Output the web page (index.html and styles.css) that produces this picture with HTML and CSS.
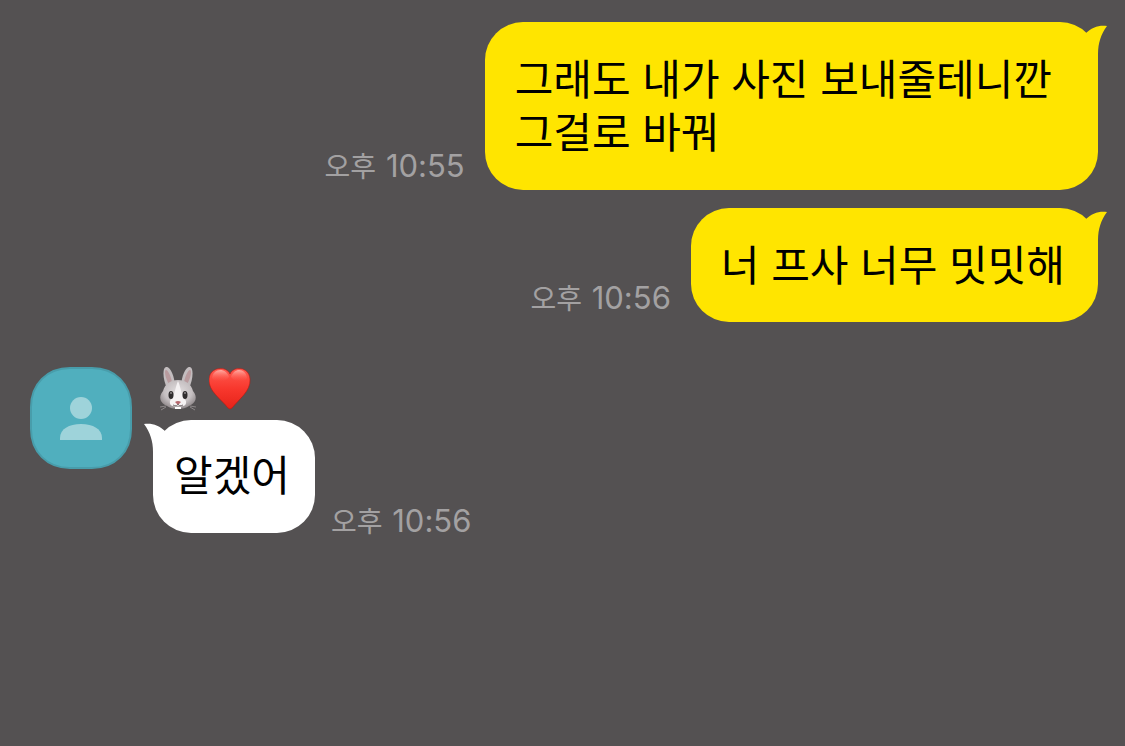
FILE: index.html
```html
<!DOCTYPE html>
<html lang="ko">
<head>
    <meta charset="UTF-8">
    <meta name="viewport" content="width=device-width, initial-scale=1.0">
    <title>채팅방</title>
    <link rel="stylesheet" href="styles.css">
</head>
<body>
<main class="chat">
    <!-- 내가 보낸 메시지 -->
    <div class="row mine">
        <time class="time" datetime="22:55">오후 <span class="clock">10:55</span></time>
        <div class="bubble wide">
            그래도 내가 사진 보내줄테니깐<br>그걸로 바꿔
            <svg class="tail" viewBox="0 0 40 44" aria-hidden="true">
                <path d="M17 12C24 5 31 3 39 4C33 12 30 21 30 32V42L14 32Z"/>
            </svg>
        </div>
    </div>
    <div class="row mine">
        <time class="time" datetime="22:56">오후 <span class="clock">10:56</span></time>
        <div class="bubble">
            너 프사 너무 밋밋해
            <svg class="tail" viewBox="0 0 40 44" aria-hidden="true">
                <path d="M17 12C24 5 31 3 39 4C33 12 30 21 30 32V42L14 32Z"/>
            </svg>
        </div>
    </div>

    <!-- 상대방 메시지 -->
    <div class="friend">
        <svg class="avatar" viewBox="0 0 102 102" role="img" aria-label="프로필">
            <path class="avatar-bg" d="M40 1H62C85 1 101 17 101 40V62C101 85 85 101 62 101H40C17 101 1 85 1 62V40C1 17 17 1 40 1Z"/>
            <circle class="avatar-man" cx="51" cy="41" r="11"/>
            <path class="avatar-man" d="M30 73V71C30 62 39 57 51 57S72 62 72 71V73Z"/>
        </svg>
        <div class="content">
            <div class="name">
                <svg class="emoji" viewBox="0 0 42 46" role="img" aria-label="토끼">
                    <defs>
                        <radialGradient id="fur" cx="50%" cy="40%" r="60%">
                            <stop offset="0" stop-color="#e2dedf"/>
                            <stop offset=".65" stop-color="#c5bfc1"/>
                            <stop offset="1" stop-color="#918a8c"/>
                        </radialGradient>
                    </defs>
                    <path d="M10 21C6 13 5 1 9 0S17 8 18 18Z" fill="#c3bdbf"/>
                    <path d="M32 21C36 13 37 1 33 0S25 8 24 18Z" fill="#c3bdbf"/>
                    <path d="M12 17C8 11 7 3 9 3S15 11 15 17Z" fill="#b99b9e"/>
                    <path d="M30 17C34 11 35 3 33 3S27 11 27 17Z" fill="#b99b9e"/>
                    <path d="M21 13C29 13 34 17 36 24C41 30 39 36 32 39C27 43 15 43 10 39C3 36 1 30 6 24C8 17 13 13 21 13Z" fill="url(#fur)"/>
                    <path d="M21 14C24 21 24 28 29 34C30 39 25 40 21 39C17 40 12 39 13 34C18 28 18 21 21 14Z" fill="#f5f2f3"/>
                    <ellipse cx="14" cy="28" rx="2.500" ry="4" fill="#302d2e"/>
                    <ellipse cx="28" cy="28" rx="2.500" ry="4" fill="#302d2e"/>
                    <circle cx="14" cy="26" r="1" fill="#8d898a"/>
                    <circle cx="28" cy="26" r="1" fill="#8d898a"/>
                    <path d="M18 35Q21 33 24 35L21 38Z" fill="#b5686e"/>
                    <path d="M16 38Q20 40 21 37Q22 40 26 38" fill="none" stroke="#756c6f"/>
                    <path d="M18 40H24V42H18Z" fill="#fff"/>
                    <path d="M9 39L3 40M9 40L4 43M33 39L39 40M33 40L38 43" fill="none" stroke="#8c8788"/>
                </svg>
                <svg class="emoji" viewBox="0 0 42 46" role="img" aria-label="하트">
                    <defs>
                        <linearGradient id="red" x2="0" y2="1">
                            <stop offset="0" stop-color="#ff5b50"/>
                            <stop offset=".5" stop-color="#f8372d"/>
                            <stop offset="1" stop-color="#e62319"/>
                        </linearGradient>
                        <linearGradient id="shine" x2="0" y2="1">
                            <stop offset="0" stop-color="#ffd0c8" stop-opacity=".7"/>
                            <stop offset="1" stop-color="#ff5549" stop-opacity="0"/>
                        </linearGradient>
                    </defs>
                    <path d="M21 7C18 -1 1 -1 0 12C-1 24 12 32 19 41Q21 43 23 41C30 32 42 24 41 12C40 -1 24 -1 21 7Z" fill="url(#red)" stroke="#b9170f" stroke-width=".6"/>
                    <path d="M20 10C17 0 4 1 3 11C5 16 16 16 20 10Z" fill="url(#shine)"/>
                    <path d="M22 10C25 0 37 1 38 11C36 16 26 16 22 10Z" fill="url(#shine)"/>
                </svg>
            </div>
            <div class="row">
                <div class="bubble">
                    알겠어
                    <svg class="tail" viewBox="0 0 40 44" aria-hidden="true">
                        <path d="M17 12C24 5 31 3 39 4C33 12 30 21 30 32V42L14 32Z"/>
                    </svg>
                </div>
                <time class="time" datetime="22:56">오후 <span class="clock">10:56</span></time>
            </div>
        </div>
    </div>
</main>
</body>
</html>
```
FILE: styles.css
```css
* {
    box-sizing: border-box;
}

body {
    margin: 0;
    min-height: 100vh;
    background: #545152;
    font-family: "Liberation Sans", "Noto Sans CJK KR", sans-serif;
}

.chat {
    padding: 22px 27px 22px 30px;
}

.row {
    display: flex;
    align-items: flex-end;
    gap: 16px;
}

.mine {
    justify-content: flex-end;
    gap: 20px;
    margin-bottom: 18px;
}

/* 말풍선 */
.bubble {
    position: relative;
    padding: 30px 25px 30px 21px;
    border-radius: 38px;
    background: #fff;
    color: #000;
    font-size: 42px;
    line-height: 53px;
}

.mine .bubble {
    padding: 32px 33px 29px 30px;
    background: #ffe500;
}

.mine .wide {
    padding: 32px 46px 30px 30px;
}

/* 말풍선 꼬리 */
.tail {
    position: absolute;
    top: 0;
    left: -10px;
    width: 40px;
    height: 44px;
    fill: #fff;
    transform: scaleX(-1);
}

.mine .tail {
    left: auto;
    right: -10px;
    fill: #ffe500;
    transform: none;
}

.time {
    flex-shrink: 0;
    color: #a3a1a2;
    font-size: 28px;
    line-height: 20px;
}

.mine .time {
    padding-bottom: 12px;
}

.clock {
    margin-left: 2px;
    font-family: Inter, sans-serif;
    font-size: 31px;
}

/* 상대방 */
.friend {
    display: flex;
    align-items: flex-start;
    gap: 21px;
    margin-top: 45px;
}

.avatar {
    flex-shrink: 0;
    width: 102px;
    height: 102px;
}

.avatar-bg {
    fill: #50afbe;
    stroke: #489dab;
    stroke-width: 2px;
}

.avatar-man {
    fill: #9ed3da;
}

.name {
    display: flex;
    gap: 10px;
    height: 53px;
    padding-left: 4px;
}

.emoji {
    width: 42px;
    height: 46px;
}
```
